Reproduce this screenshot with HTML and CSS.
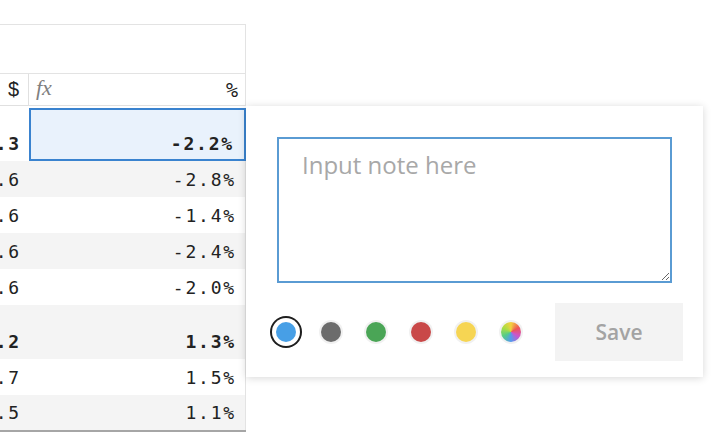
FILE: index.html
```html
<!DOCTYPE html>
<html>
<head>
<meta charset="utf-8">
<link rel="stylesheet" href="styles.css">
</head>
<body>
<div class="sheet">
  <div class="topbox"></div>
  <div class="row hdr">
    <div class="c1"><span class="dollar">$</span></div>
    <div class="c2"><span class="fx">fx</span><span class="pct">%</span></div>
  </div>
  <div class="row group">
    <div class="c1 b">.3</div>
    <div class="c2 b sel">-2.2%</div>
  </div>
  <div class="row alt"><div class="c1">.6</div><div class="c2">-2.8%</div></div>
  <div class="row"><div class="c1">.6</div><div class="c2">-1.4%</div></div>
  <div class="row alt"><div class="c1">.6</div><div class="c2">-2.4%</div></div>
  <div class="row"><div class="c1">.6</div><div class="c2">-2.0%</div></div>
  <div class="row group alt"><div class="c1 b">.2</div><div class="c2 b">1.3%</div></div>
  <div class="row"><div class="c1">.7</div><div class="c2">1.5%</div></div>
  <div class="row alt last"><div class="c1">.5</div><div class="c2">1.1%</div></div>
</div>

<div class="popup">
  <textarea class="note" placeholder="Input note here"></textarea>
  <div class="footer">
    <div class="colors">
      <span class="dot blue selected"></span>
      <span class="dot gray"></span>
      <span class="dot green"></span>
      <span class="dot red"></span>
      <span class="dot yellow"></span>
      <span class="dot multi"></span>
    </div>
    <button class="save">Save</button>
  </div>
</div>
</body>
</html>
```

FILE: styles.css
```css
html, body {
  margin: 0;
  padding: 0;
  background: #fff;
  overflow: hidden;
  width: 723px;
  height: 435px;
}
.sheet {
  margin-left: -31px;
  margin-top: 24px;
  width: 277px;
  font-family: "DejaVu Sans Mono", monospace;
  font-size: 18px;
  color: #222;
}
.topbox {
  height: 48px;
  border-top: 1px solid #e3e3e3;
  border-right: 1px solid #e3e3e3;
  border-bottom: 1px solid #e3e3e3;
}
.row {
  display: grid;
  grid-template-columns: 60px 217px;
  height: 36px;
}
.row > div {
  display: flex;
  align-items: flex-end;
  justify-content: flex-end;
  box-sizing: border-box;
  padding-bottom: 7px;
  letter-spacing: 1.8px;
}
.row .c1 { padding-right: 8px; }
.row .c2 {
  padding-right: 9px;
  border-right: 1px solid #e3e3e3;
}
.row.alt { background: #f4f4f4; }
.row.group { height: 54px; }
.row .b { font-weight: bold; }
.hdr {
  height: 31px;
  border-bottom: 1px solid #e0e0e0;
  margin-bottom: 1px;
}
.hdr > div { padding-bottom: 0; align-items: center; letter-spacing: 0; }
.hdr .c1 { border-right: 1px solid #e0e0e0; padding-right: 9px; }
.hdr .c2 { justify-content: space-between; padding-left: 7px; padding-right: 7px; }
.dollar {
  font-family: "Liberation Sans", sans-serif;
  font-size: 20px;
  color: #222;
}
.fx {
  font-family: "Liberation Serif", serif;
  font-style: italic;
  font-size: 22px;
  color: #808080;
  margin-top: -3px;
}
.pct {
  font-size: 20px;
  color: #222;
}
.row .sel {
  background: #e9f2fc;
  border: 2px solid #3a83cf;
  padding-right: 10px;
  padding-bottom: 5px;
  margin-top: 1px;
}
.row.last { border-bottom: 2px solid #a6a6a6; height: 35px; }

.popup {
  position: absolute;
  left: 246px;
  top: 106px;
  width: 457px;
  box-sizing: border-box;
  padding: 31px 20px 16px 30px;
  background: #fff;
  box-shadow: 0 1px 8px rgba(0,0,0,0.16);
  font-family: "Open Sans", sans-serif;
}
.note {
  display: block;
  box-sizing: border-box;
  width: 395px;
  height: 146px;
  margin: 0 12px 0 1px;
  border: 2px solid #5a9bd3;
  padding: 9px 23px;
  font-family: "Open Sans", sans-serif;
  font-size: 24px;
  color: #333;
  outline: none;
}
.note::placeholder { color: #a8a8a8; }
.footer {
  display: flex;
  align-items: center;
  justify-content: space-between;
  margin-top: 20px;
}
.colors {
  display: flex;
  align-items: center;
  gap: 25px;
}
.dot {
  width: 20px;
  height: 20px;
  border-radius: 50%;
  box-shadow: 0 0 0 2px #f1f1f1;
}
.dot.selected { box-shadow: 0 0 0 4px #fff, 0 0 0 6px #1e1e1e; }
.blue { background: #479fe6; }
.gray { background: #6c6c6c; }
.green { background: #4aa556; }
.red { background: #c94848; }
.yellow { background: #f6d553; }
.multi { background: conic-gradient(#f4d03f, #e55, #c5c, #59e, #5c8, #ad4, #f4d03f); }
.save {
  width: 128px;
  height: 58px;
  border: none;
  background: #f3f3f3;
  color: #a3a3a3;
  font-family: "Open Sans", sans-serif;
  font-weight: 600;
  font-size: 21px;
}
```
